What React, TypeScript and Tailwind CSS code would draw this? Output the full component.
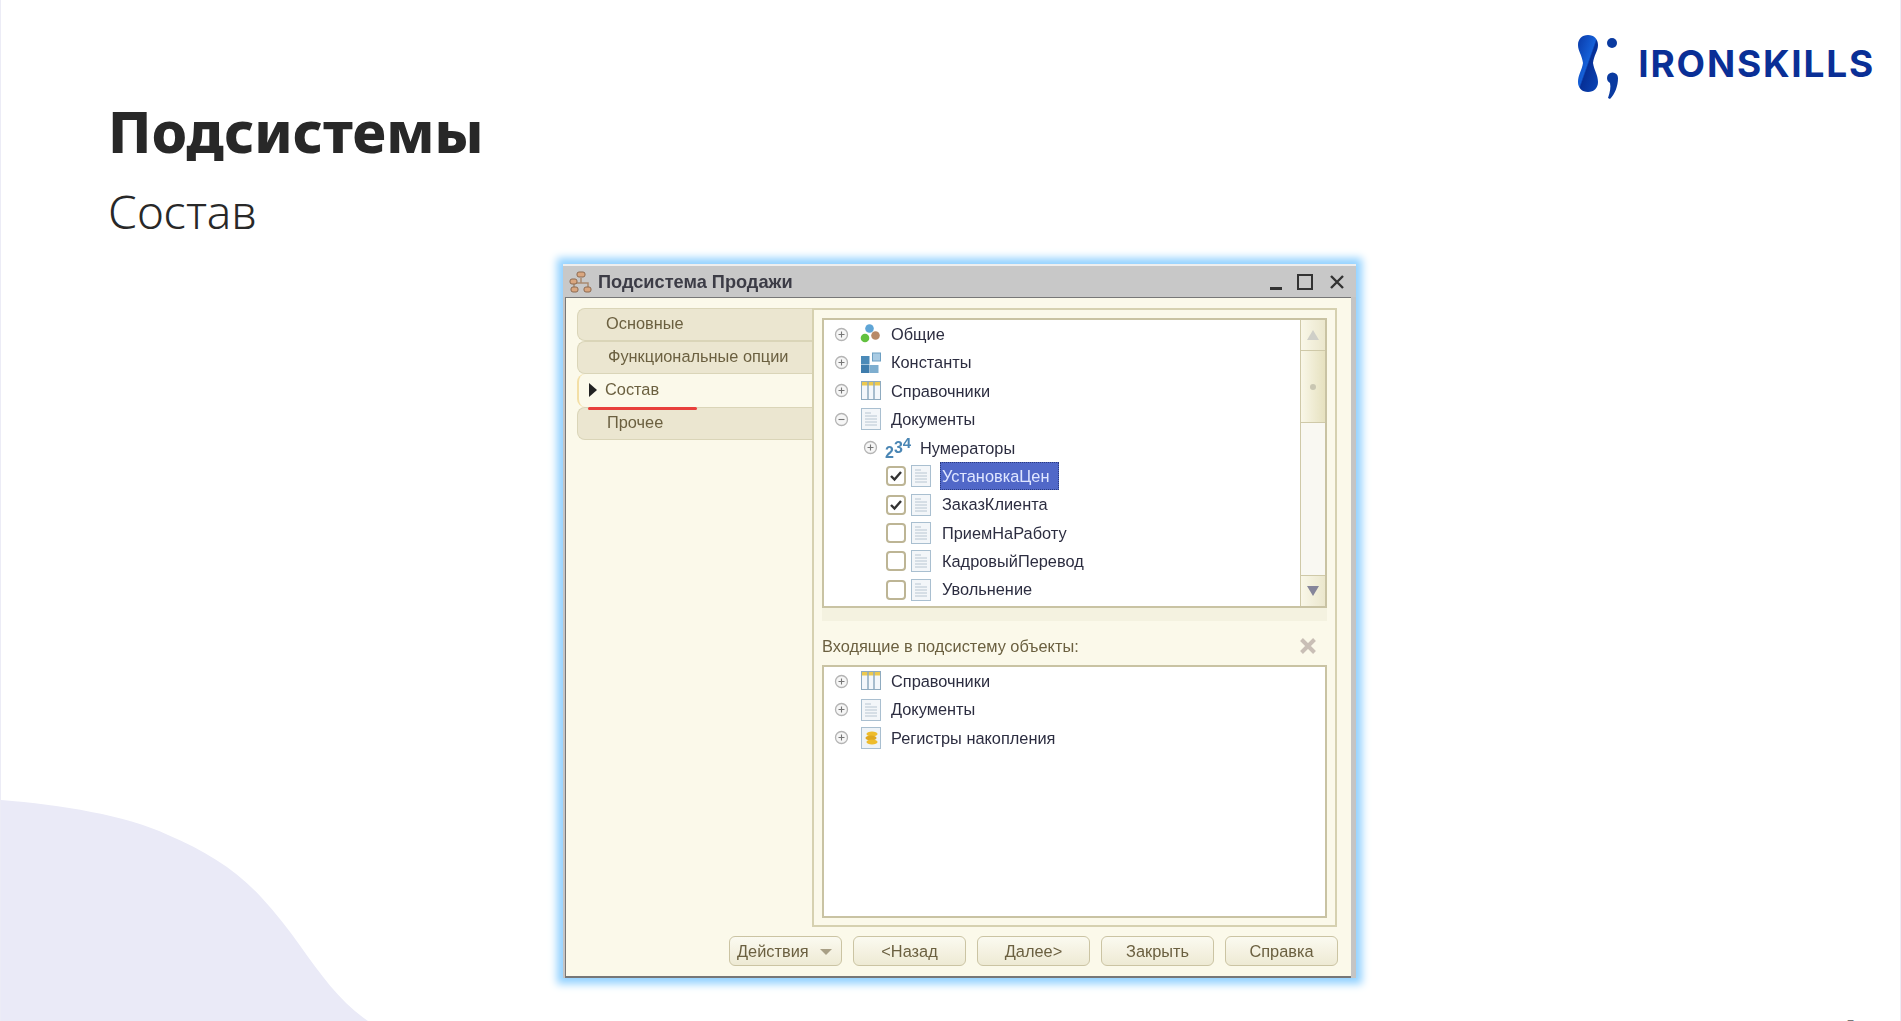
function Expander({ open = false }: { open?: boolean }) {
  return (
    <svg width="15" height="15" viewBox="0 0 15 15" className="shrink-0">
      <circle cx="7.5" cy="7.5" r="6" fill="#f6f6f6" stroke="#b4b4b4" strokeWidth="1.3" />
      <path d={open ? "M4.5 7.5h6" : "M4.5 7.5h6M7.5 4.5v6"} stroke="#777" strokeWidth="1.1" />
    </svg>
  );
}

function CommonIcon() {
  return (
    <svg width="22" height="22" viewBox="0 0 22 22" className="shrink-0">
      <circle cx="9.5" cy="5.5" r="4.3" fill="#5fa5d6" />
      <circle cx="5" cy="15" r="4.3" fill="#62c13f" />
      <circle cx="15.5" cy="12.5" r="4.3" fill="#b78a68" />
    </svg>
  );
}

function ConstIcon() {
  return (
    <svg width="22" height="22" viewBox="0 0 22 22" className="shrink-0">
      <rect x="1" y="4" width="8.5" height="8.5" fill="#4b8ab8" />
      <rect x="1" y="13" width="8.5" height="8" fill="#3f7dad" />
      <rect x="10" y="13" width="8.5" height="8" fill="#7eaecf" />
      <rect x="12.5" y="1" width="8" height="8" fill="#a9cbe3" stroke="#6d9fc2" />
    </svg>
  );
}

function TableIcon() {
  return (
    <svg width="22" height="22" viewBox="0 0 22 22" className="shrink-0">
      <rect x="1.5" y="1.5" width="19" height="18" fill="#f3f7fb" stroke="#8fabc0" />
      <rect x="2" y="2" width="18" height="3.5" fill="#ecc94f" />
      <path d="M8 2v17M14 2v17" stroke="#8fabc0" strokeWidth="1.5" />
    </svg>
  );
}

function DocIcon() {
  return (
    <svg width="22" height="22" viewBox="0 0 22 22" className="shrink-0">
      <rect x="1.5" y="0.5" width="19" height="21" fill="#f3f6f9" stroke="#a9bfd0" />
      <path d="M5 5h6M5 8h12M5 11h12M5 14h12M5 17h12" stroke="#b8c6d2" />
    </svg>
  );
}

function RegisterIcon() {
  return (
    <svg width="22" height="22" viewBox="0 0 22 22" className="shrink-0">
      <rect x="1.5" y="0.5" width="19" height="21" fill="#eef3f7" stroke="#a9bfd0" />
      <ellipse cx="12" cy="7" rx="5.5" ry="2.6" fill="#eebc2c" />
      <ellipse cx="11" cy="11" rx="5.5" ry="2.6" fill="#dfa820" />
      <ellipse cx="12" cy="15" rx="5.5" ry="2.6" fill="#eebc2c" />
    </svg>
  );
}

function CheckBox({ checked = false }: { checked?: boolean }) {
  return (
    <span className="flex h-[20px] w-[20px] shrink-0 items-center justify-center rounded-[4px] border-2 border-[#bdb595] bg-white">
      {checked && (
        <svg width="14" height="12" viewBox="0 0 14 12">
          <path d="M2 6l3.5 3.5L12 2" fill="none" stroke="#333" strokeWidth="2.4" />
        </svg>
      )}
    </span>
  );
}

function TreeRow({ icon, label, open }: { icon: React.ReactNode; label: string; open?: boolean }) {
  return (
    <div className="flex h-[28.4px] items-center pl-[10px]">
      <Expander open={open} />
      <span className="ml-[11px] flex w-[31px] shrink-0">{icon}</span>
      <span>{label}</span>
    </div>
  );
}

function NumeratorRow() {
  return (
    <div className="flex h-[28.4px] items-center pl-[39px]">
      <Expander />
      <span className="ml-[7px] flex w-[35px] shrink-0 items-end font-bold leading-none text-[#4a86b4]">
        <span className="translate-y-[5px] text-[16px]">2</span>
        <span className="text-[16px]">3</span>
        <span className="-translate-y-[6px] text-[15px]">4</span>
      </span>
      <span>Нумераторы</span>
    </div>
  );
}

function DocRow({ label, checked, selected }: { label: string; checked?: boolean; selected?: boolean }) {
  return (
    <div className="flex h-[28.4px] items-center pl-[62px]">
      <CheckBox checked={checked} />
      <span className="ml-[4px] flex w-[32px] shrink-0">
        <DocIcon />
      </span>
      {selected ? (
        <span className="-ml-[2px] flex h-[28px] w-[119px] items-center border border-dotted border-[#2a3a80] bg-[#5168c8] pl-[1px] text-[#dfe6ff]">
          {label}
        </span>
      ) : (
        <span>{label}</span>
      )}
    </div>
  );
}

function NavTab({ label, active, pad = "pl-[28px]" }: { label: string; active?: boolean; pad?: string }) {
  return (
    <div
      className={
        active
          ? "relative flex h-[33px] items-center rounded-l-[8px] border-l-2 border-[#f3dfa6] bg-[#fbf9ea] pb-[2px] pl-[10px]"
          : "flex h-[33px] items-center rounded-l-[8px] border border-r-0 border-[#dad5b8] bg-[#ebe6d0] pb-[2px] " + pad
      }
    >
      {active && (
        <>
          <span className="mr-[8px] h-0 w-0 border-y-[7px] border-l-[8px] border-y-transparent border-l-[#222]" />
          <span>{label}</span>
          <span className="absolute -bottom-[3px] left-[9px] h-[3px] w-[109px] rounded-full bg-[#e8403c]" />
        </>
      )}
      {!active && label}
    </div>
  );
}

function Btn({ label, menu }: { label: string; menu?: boolean }) {
  return (
    <div
      className={
        "flex h-[30px] items-center rounded-[6px] border border-[#cbc4a3] bg-gradient-to-b from-[#fbfaf0] to-[#eeead4] " +
        (menu ? "w-[113px] justify-between px-[7px]" : "w-[113px] justify-center")
      }
    >
      {label}
      {menu && <span className="mr-[2px] mt-[2px] h-0 w-0 border-x-[6px] border-t-[6px] border-x-transparent border-t-[#a89f85]" />}
    </div>
  );
}

function ScrollBar() {
  return (
    <div className="flex w-[25px] shrink-0 flex-col border-l border-[#cfc9a8] bg-[#f9f8f2]">
      <div className="flex h-[31px] items-center justify-center border-b border-[#cfc9a8] bg-gradient-to-r from-[#f9f7e8] to-[#ebe7cd]">
        <span className="h-0 w-0 border-x-[6px] border-b-[10px] border-x-transparent border-b-[#cfcfc8]" />
      </div>
      <div className="flex h-[72px] items-center justify-center border-b border-[#cfc9a8] bg-gradient-to-r from-[#f9f7e8] to-[#e6e1bf]">
        <span className="h-[6px] w-[6px] rounded-full bg-[#c9c6b2]" />
      </div>
      <div className="flex-1" />
      <div className="flex h-[31px] items-center justify-center border-t border-[#cfc9a8] bg-gradient-to-r from-[#f9f7e8] to-[#ebe7cd]">
        <span className="h-0 w-0 border-x-[6px] border-t-[10px] border-x-transparent border-t-[#85859a]" />
      </div>
    </div>
  );
}

function Logo() {
  return (
    <div className="flex items-start pr-[25px] pt-[34px]">
      <svg width="62" height="67" viewBox="0 0 62 67" className="shrink-0">
        <defs>
          <linearGradient id="neck" x1="0" y1="0" x2="1" y2="1">
            <stop offset="0" stopColor="#0a3aa8" />
            <stop offset="0.48" stopColor="#1560d8" />
            <stop offset="0.52" stopColor="#062f96" />
            <stop offset="1" stopColor="#0b46b8" />
          </linearGradient>
        </defs>
        <path
          d="M12 1C18 1 22 5 22 11C22 17 18 21 17 29C18 36 22 41 22 48C22 54 18 58 12 58C6 58 2 54 2 48C2 41 6 36 7 29C6 21 2 17 2 11C2 5 6 1 12 1Z"
          fill="url(#neck)"
        />
        <circle cx="36" cy="9" r="5" fill="#0a3aa0" />
        <path d="M31 44a5.5 5.5 0 0 1 11 0C42 52 39 60 34 65L32 64C34 58 35 53 34 49C32 48 31 46 31 44Z" fill="#0a3aa0" />
      </svg>
      <span className="mt-[7px] font-['Inter',sans-serif] text-[37px] font-bold leading-[46px] tracking-[1.8px] text-[#0a2f96]">
        IRONSKILLS
      </span>
    </div>
  );
}

export default function App() {
  return (
    <div className="relative h-[1021px] w-full overflow-hidden border-x border-x-[#ececf6] bg-white">
      {/* background blob */}
      <svg className="absolute bottom-0 left-0" width="370" height="221" viewBox="0 800 370 221">
        <path d="M0 800C60 805 125 815 167 835C205 851 235 870 260 897C275 913 288 930 300 947C320 975 340 1003 367 1021L0 1021Z" fill="#eaeaf7" />
      </svg>

      <div className="absolute left-[1845px] top-[1014px] font-['Noto_Sans',sans-serif] text-[16px] text-[#777]">5</div>

      <div className="relative flex h-[264px] justify-between">
        <div className="pl-[107px] pt-[92px] text-[#282828]">
          <h1 className="font-['Noto_Sans',sans-serif] text-[57px] font-extrabold leading-[78px]">Подсистемы</h1>
          <p className="mt-[12px] font-['Noto_Sans',sans-serif] text-[46px] font-light leading-[58px]">Состав</p>
        </div>
        <Logo />
      </div>

      {/* dialog window */}
      <div className="relative ml-[562px] w-[793px] bg-[#c4c4c4] font-['Liberation_Sans',sans-serif] text-[16.35px] text-[#2c2d40] shadow-[0_0_8px_6px_#93d2ff] blur-[0.5px]">
        <div className="flex h-[33px] items-center border-t-2 border-t-[#eee] bg-[#c8c8c8] pl-[6px] pr-[11px]">
          <svg width="24" height="24" viewBox="0 0 24 24" className="shrink-0">
            <path d="M12 8v5M5 17v-4h14v4" fill="none" stroke="#a98a70" strokeWidth="1.5" />
            <rect x="8" y="2" width="8" height="5" rx="2" fill="#d9a67f" stroke="#8d6a50" />
            <rect x="1" y="9" width="7" height="5" rx="2" fill="#d9a67f" stroke="#8d6a50" />
            <rect x="2" y="17" width="7" height="5" rx="2" fill="#d9a67f" stroke="#8d6a50" />
            <rect x="15" y="17" width="7" height="5" rx="2" fill="#d9a67f" stroke="#8d6a50" />
          </svg>
          <span className="ml-[5px] mt-[2px] text-[18.2px] font-bold text-[#3c3c46]">Подсистема Продажи</span>
          <div className="ml-auto flex items-center gap-[15px]">
            <span className="mt-[13px] h-[3px] w-[12px] bg-[#333]" />
            <span className="h-[16px] w-[16px] border-2 border-[#333]" />
            <svg width="16" height="16" viewBox="0 0 16 16" className="ml-[1px]">
              <path d="M2 2l12 12M14 2L2 14" stroke="#333" strokeWidth="2.4" />
            </svg>
          </div>
        </div>

        <div className="ml-[2px] mr-[5px] flex h-[681px] flex-col border-b-2 border-l border-t border-[#777] bg-[#fbf9ea] pt-[10px] text-[#2c2d40]">
          <div className="flex items-start pl-[11px]">
            <div className="w-[235px] shrink-0 text-[#6b6040]">
              <NavTab label="Основные" />
              <NavTab label="Функциональные опции" pad="pl-[30px]" />
              <NavTab label="Состав" active />
              <NavTab label="Прочее" pad="pl-[29px]" />
            </div>
            <div className="flex h-[619px] w-[525px] flex-col border-2 border-[#d6d1b0] px-[8px] pb-[7px] pt-[8px]">
              <div className="flex h-[290px] shrink-0 border-2 border-[#c9c3a3] bg-white">
                <div className="min-w-0 flex-1">
                  <TreeRow icon={<CommonIcon />} label="Общие" />
                  <TreeRow icon={<ConstIcon />} label="Константы" />
                  <TreeRow icon={<TableIcon />} label="Справочники" />
                  <TreeRow icon={<DocIcon />} label="Документы" open />
                  <NumeratorRow />
                  <DocRow label="УстановкаЦен" checked selected />
                  <DocRow label="ЗаказКлиента" checked />
                  <DocRow label="ПриемНаРаботу" />
                  <DocRow label="КадровыйПеревод" />
                  <DocRow label="Увольнение" />
                </div>
                <ScrollBar />
              </div>
              <div className="h-[13px] shrink-0 bg-[#f4f2e0]" />
              <div className="flex h-[44px] shrink-0 items-center justify-between pr-[10px] pt-[6px] text-[#6b6040]">
                <span>Входящие в подсистему объекты:</span>
                <svg width="18" height="18" viewBox="0 0 18 18">
                  <path d="M2.5 2.5l13 13M15.5 2.5l-13 13" stroke="#c9bfb6" strokeWidth="4" />
                </svg>
              </div>
              <div className="min-h-0 flex-1 border-2 border-[#c9c3a3] bg-white">
                <TreeRow icon={<TableIcon />} label="Справочники" />
                <TreeRow icon={<DocIcon />} label="Документы" />
                <TreeRow icon={<RegisterIcon />} label="Регистры накопления" />
              </div>
            </div>
          </div>
          <div className="mt-[9px] flex justify-end gap-[11px] pr-[13px] text-[#6b6040]">
            <Btn label="Действия" menu />
            <Btn label="<Назад" />
            <Btn label="Далее>" />
            <Btn label="Закрыть" />
            <Btn label="Справка" />
          </div>
        </div>
      </div>
    </div>
  );
}
